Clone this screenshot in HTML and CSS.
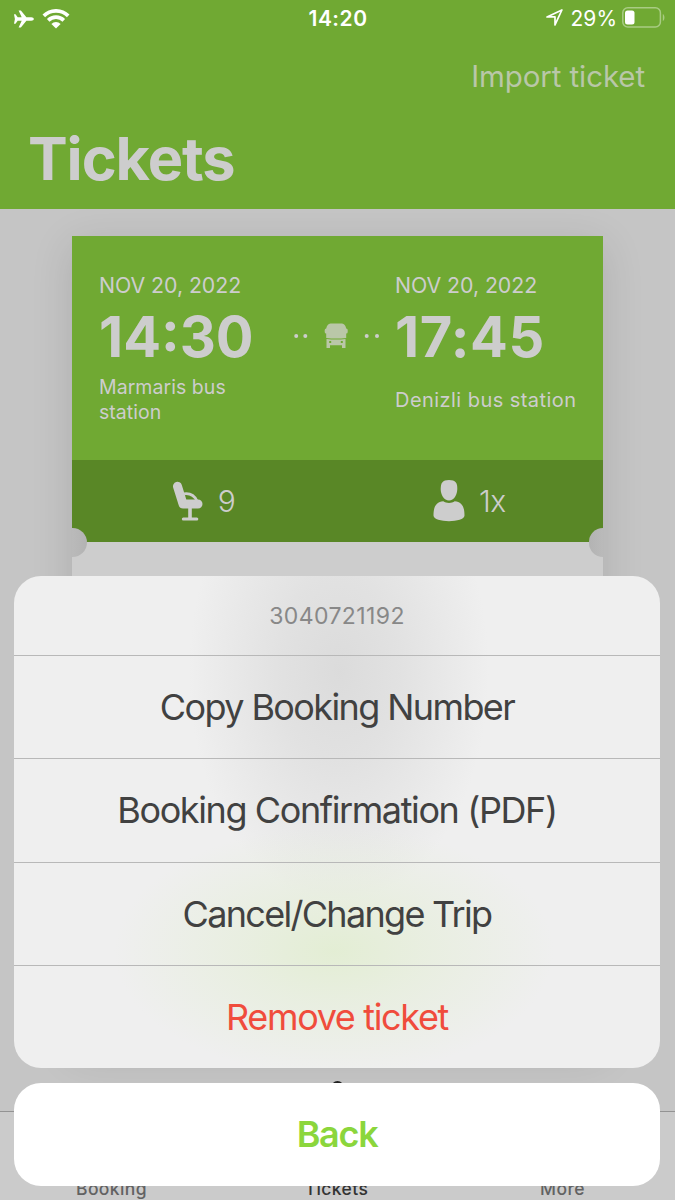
FILE: index.html
```
<!DOCTYPE html>
<html lang="en">
<head>
    <meta charset="UTF-8">
    <meta name="viewport" content="width=device-width, initial-scale=1.0">
    <title>Tickets</title>
    <link rel="stylesheet" href="styles.css">
</head>
<body>
<div class="screen">

    <!-- Header -->
    <header class="header">
        <div class="status">
            <div class="status-left">
                <svg width="20" height="18" viewBox="0 0 20 18" fill="#fff"><path d="M0 4.200h1.500l2.200 3.100h4L4.600.6h2.300l5.500 6.700h4.900c1.500 0 2.500.8 2.500 1.700s-1 1.700-2.500 1.700h-4.900l-5.500 6.700H4.600l3.100-6.700h-4l-2.200 3.100H0l.9-4.800z"/></svg>
                <svg class="wifi" width="28" height="20" viewBox="0 0 28 20"><path d="M1.800 6.800a17.500 17.500 0 0 1 24.400 0M6.200 11.300a11.300 11.300 0 0 1 15.600 0" fill="none" stroke="#fff" stroke-width="3.700"/><path d="M9.400 14.900a6.600 6.600 0 0 1 9.200 0L14 19.500z" fill="#fff"/></svg>
            </div>
            <span class="clock">14:20</span>
            <div class="status-right">
                <svg width="17" height="17" viewBox="0 0 17 17"><path d="M1 7.900L15.900 1 9 15.900V7.900z" fill="none" stroke="#fff" stroke-width="1.700" stroke-linejoin="round"/></svg>
                <span class="percent">29%</span>
                <svg width="43" height="21" viewBox="0 0 43 21"><rect x=".8" y=".8" width="37.600" height="19.200" rx="5" fill="none" stroke="#a9cc84" stroke-width="1.500"/><rect x="3" y="3.500" width="9.500" height="14" rx="2.500" fill="#fff"/><path d="M40.800 7c2.200 1 2.200 6 0 7z" fill="#a9cc84"/></svg>
            </div>
        </div>
        <div class="import">Import ticket</div>
        <h1 class="title">Tickets</h1>
    </header>

    <!-- Ticket -->
    <main class="content">
        <div class="ticket">
            <div class="trip">
                <div class="stop from">
                    <div class="date">NOV 20, 2022</div>
                    <div class="time">14:30</div>
                    <div class="station">Marmaris bus<br>station</div>
                </div>
                <div class="route">
                    <svg width="88" height="26" viewBox="0 0 88 26">
                        <g fill="#cdcdcd"><circle cx="3.200" cy="13" r="2"/><circle cx="12.300" cy="13" r="2"/><circle cx="73.700" cy="13" r="2"/><circle cx="84" cy="13" r="2"/></g>
                        <g fill="#bac7a8"><path d="M37.500 .5h11.500q3.300.3 4.200 5 1.500 0 1.500 1.500v2q0 1.500-1.500 1.500v4.500q-10 1-20 0v-4.500q-1.500 0-1.500-1.500V7q0-1.500 1.500-1.500 .9-4.700 4.300-5z"/><path fill-rule="evenodd" d="M33.500 16q9.500 1 19 0V25H49v-2.800H37V25h-3.500zM36.200 18v2h2v-2zM47.800 18v2h2v-2z"/></g>
                    </svg>
                </div>
                <div class="stop to">
                    <div class="date">NOV 20, 2022</div>
                    <div class="time">17:45</div>
                    <div class="station single">Denizli bus station</div>
                </div>
            </div>
            <div class="details">
                <div class="detail">
                    <svg width="32" height="40" viewBox="0 0 32 40">
                        <path d="M5.500 5.300L11 23H26" fill="none" stroke="#cdcdcd" stroke-width="9" stroke-linecap="round" stroke-linejoin="round"/>
                        <path d="M12 12.800C18 12 22.500 14.500 25 20" fill="none" stroke="#cdcdcd" stroke-width="2.800"/>
                        <path d="M18 27v11" fill="none" stroke="#cdcdcd" stroke-width="3.600"/>
                        <path d="M11.300 38h13.500" fill="none" stroke="#cdcdcd" stroke-width="3" stroke-linecap="round"/>
                    </svg>
                    <span>9</span>
                </div>
                <div class="detail">
                    <svg width="32" height="42" viewBox="0 0 32 42" fill="#cdcdcd"><path d="M16 0C22.500 0 24.500 3 24.300 9S21 20.500 16 20.500 7.700 15 7.700 9 9.500 0 16 0z"/><path d="M10.300 21.300c3 2.300 8.400 2.300 11.400 0C28.500 22 31.500 26 31.500 35.500c0 7.500-31 7.500-31 0C.5 26 3.500 22 10.300 21.300z"/></svg>
                    <span class="count">1x</span>
                </div>
            </div>
            <i class="notch left"></i>
            <i class="notch right"></i>
        </div>
        <div class="page-dot"></div>
    </main>

    <!-- Tab bar -->
    <nav class="tabs">
        <span>Booking</span>
        <span class="active">Tickets</span>
        <span>More</span>
    </nav>

    <!-- Action sheet -->
    <div class="overlay">
        <div class="sheet">
            <div class="sheet-title">3040721192</div>
            <div class="action copy">Copy Booking Number</div>
            <div class="action pdf">Booking Confirmation (PDF)</div>
            <div class="action cancel">Cancel/Change Trip</div>
            <div class="action remove">Remove ticket</div>
        </div>
        <div class="back">Back</div>
    </div>

</div>
</body>
</html>
```
FILE: styles.css
```
* { box-sizing: border-box; }
body { margin: 0; font-family: Inter, "Liberation Sans", sans-serif; }
svg { display: block; flex: none; }
.screen { position: relative; display: flex; flex-direction: column; width: 675px; height: 1200px; overflow: hidden; background: #c5c5c5; }

.header { position: relative; z-index: 1; height: 209px; flex: none; background: #70a933; color: #cdcdcd; }
.status { display: grid; grid-template-columns: 1fr auto 1fr; align-items: center; height: 37px; padding: 0 10px 0 14px; color: #fff; }
.status-left { display: flex; align-items: center; gap: 8px; }
.status-right { display: flex; align-items: center; justify-content: flex-end; gap: 5px; margin-top: -2px; }
.clock { margin-right: 3px; font-size: 21px; font-weight: 600; letter-spacing: 0.5px; }
.percent { margin: 2px 0 0 3px; font-size: 21px; }
.import { height: 79px; padding: 20px 30px 0 0; text-align: right; font-size: 29.5px; line-height: 38px; color: #b9c7a8; letter-spacing: -0.1px; }
.title { margin: 0; padding: 7px 28px 0; font-size: 59.5px; line-height: 70px; font-weight: 700; letter-spacing: -1.1px; }

.content { flex: 1; padding: 27px 72px 0; }
.ticket { position: relative; height: 810px; background: #cdcdcd; box-shadow: 0 9px 40px rgba(0, 0, 0, 0.12); color: #cdcdcd; }
.trip { display: grid; grid-template-columns: 193px 103px 1fr; height: 224px; padding: 35px 0 0 27px; background: #70a933; }
.date { font-size: 21.3px; line-height: 28px; letter-spacing: -0.05px; }
.time { margin-top: 3px; font-size: 56px; line-height: 70px; font-weight: 700; }
.to .time { letter-spacing: 0.5px; }
.station { margin-top: 3px; font-size: 19.5px; line-height: 25px; letter-spacing: 0.05px; white-space: nowrap; }
.station.single { margin-top: 16px; font-size: 20px; letter-spacing: 0.45px; }
.route { padding: 52px 0 0 1px; }
.details { display: grid; grid-template-columns: 1fr 1fr; height: 82px; background: #598726; }
.detail { display: flex; align-items: center; justify-content: center; gap: 14px; padding-right: 2px; font-size: 30px; font-weight: 350; }
.detail span { margin-top: -1px; }
.count { letter-spacing: -0.5px; }
.notch { position: absolute; top: 292px; width: 14.5px; height: 29px; }
.notch.left { left: 0; border-radius: 0 15px 15px 0; background: linear-gradient(90deg, #bababa, #b3b3b3); }
.notch.right { right: 0; border-radius: 15px 0 0 15px; background: linear-gradient(270deg, #bababa, #b3b3b3); }
.page-dot { width: 13px; height: 13px; margin: 35px auto 0; border-radius: 50%; background: #222; }

.tabs { position: relative; display: grid; grid-template-columns: 223px 1fr 225px; height: 89px; flex: none; align-items: end; border-top: 1px solid #939393; background: #cbcbcb; text-align: center; font-size: 17.5px; line-height: 22px; font-weight: 500; letter-spacing: 0.4px; color: #626262; }
.tabs .active { color: #333; }

.overlay { position: absolute; z-index: 2; left: 14px; right: 15px; top: 576px; }
.sheet { height: 492px; overflow: hidden; border-radius: 27px; background:
    radial-gradient(ellipse 220px 125px at 320px 375px, rgba(223, 237, 203, 0.75), rgba(228, 238, 214, 0.6) 40%, transparent),
    radial-gradient(ellipse 150px 235px at 325px 95px, rgba(217, 217, 217, 0.9), rgba(221, 221, 221, 0.75) 40%, transparent),
    #efefef; text-align: center; }
.sheet-title { height: 80px; padding-top: 25px; border-bottom: 1px solid #b8b8b8; font-size: 23px; line-height: 30px; letter-spacing: 0.4px; color: #888; }
.action { height: 103px; border-bottom: 1px solid #b8b8b8; font-size: 36px; line-height: 103px; color: #414141; white-space: nowrap; }
.copy { letter-spacing: -1.6px; }
.pdf { height: 104px; letter-spacing: -1.4px; }
.cancel { letter-spacing: -1.7px; }
.remove { border-bottom: 0; letter-spacing: -1.35px; color: #f04c3c; }
.back { height: 102.5px; margin-top: 15px; border-radius: 27px; background: #fff; text-align: center; font-size: 36px; line-height: 103px; font-weight: 600; letter-spacing: -1.3px; color: #8bd63c; }
```
